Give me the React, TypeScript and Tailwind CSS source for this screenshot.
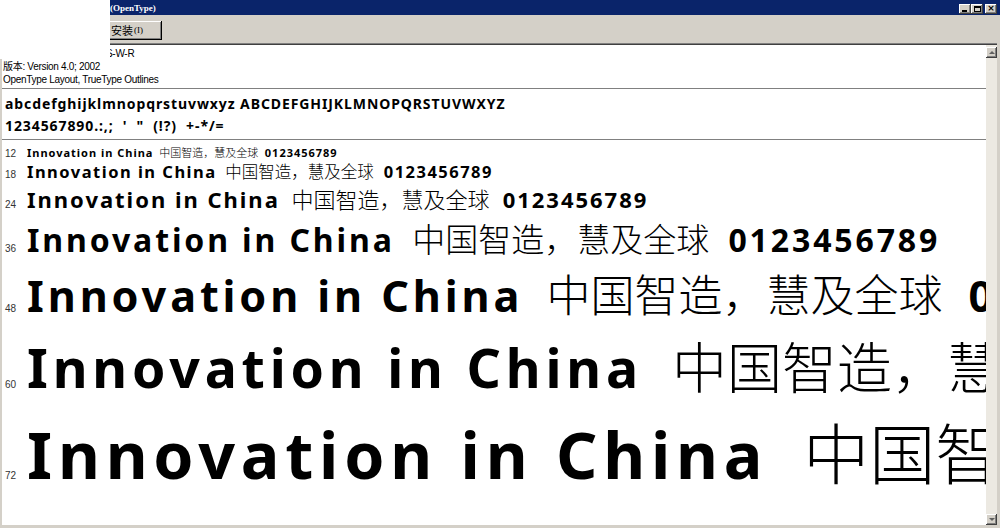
import React from "react";

const LATIN = "font-['Noto_Sans',sans-serif] font-bold";
const CJK = "font-['Noto_Sans_CJK_SC',sans-serif] font-light";
const UI = "font-['Liberation_Sans','Noto_Sans_CJK_SC',sans-serif]";

const rows = [
  { label: "12", box: "h-[22px] leading-[22px] text-[11px]", cjk: "text-[11px]" },
  { label: "18", box: "h-[16px] leading-[16px] text-[16.5px]", cjk: "text-[16.5px]" },
  { label: "24", box: "h-[39px] leading-[39px] text-[22px]", cjk: "text-[22px]" },
  { label: "36", box: "h-[41px] leading-[41px] text-[32px]", cjk: "text-[33px]" },
  { label: "48", box: "h-[69px] leading-[69px] text-[43.2px]", cjk: "text-[44px]" },
  { label: "60", box: "h-[72px] leading-[72px] text-[53.6px]", cjk: "text-[55px]" },
  { label: "72", box: "h-[100px] leading-[100px] text-[64.5px]", cjk: "text-[66px]" },
];

const bevel =
  "bg-[#d4d0c8] shadow-[inset_-1px_-1px_0_#404040,inset_1px_1px_0_#ffffff,inset_-2px_-2px_0_#808080]";

function TitleButton({ children }: { children: React.ReactNode }) {
  return (
    <div className={`w-[12px] h-[10px] flex items-center justify-center ${bevel}`}>{children}</div>
  );
}

export default function App() {
  return (
    <div className="relative w-[1000px] h-[528px] overflow-hidden bg-[#d4d0c8] text-black">
      {/* title bar */}
      <div className="h-[15px] bg-[#0a246a] flex items-end justify-between">
        <div className="pl-[110px] pb-[2px] text-[9px] leading-none font-bold text-white font-['Liberation_Serif',serif]">
          (OpenType)
        </div>
        <div className="flex items-center pr-[3px] pb-[1px]">
          <TitleButton>
            <div className="w-[5px] h-[2px] bg-black mt-[4px] -ml-[1px]" />
          </TitleButton>
          <TitleButton>
            <div className="w-[7px] h-[6px] border border-black border-t-2" />
          </TitleButton>
          <div className="w-[2px]" />
          <TitleButton>
            <span className="text-[9px] leading-none font-bold font-['DejaVu_Sans',sans-serif] -mt-[1px]">×</span>
          </TitleButton>
        </div>
      </div>

      {/* toolbar */}
      <div className="h-[28px] pl-[96px] pt-[6px]">
        <div
          className={`w-[66px] h-[19px] pl-[15px] flex items-center text-[11px] ${UI} bg-[#d4d0c8] shadow-[inset_-1px_-1px_0_#000000,inset_1px_1px_0_#ffffff,inset_-2px_-2px_0_#808080]`}
        >
          <span className="font-['Noto_Sans_CJK_SC',sans-serif] text-[11px]">安装</span>
          <span className="text-[9px] font-['Liberation_Serif',serif] ml-[1px]">(I)</span>
        </div>
      </div>

      {/* main area */}
      <div className="flex ml-[2px] mr-[3px] h-[482px] border-t border-[#808080]">
        <div className="flex flex-1 min-w-0 border-t border-[#404040]">
          <div className="flex-1 min-w-0 bg-white overflow-hidden">
            {/* info */}
            <div className={`pt-[2px] pl-[1px] text-[10px] leading-[13px] tracking-[-0.3px] ${UI}`}>
              <div className="h-[13px] whitespace-nowrap">
                <span className="inline-block w-[103px]">名称:</span>S-W-R
              </div>
              <div className="h-[13px] whitespace-nowrap">版本: Version 4.0; 2002</div>
              <div className="h-[13px] whitespace-nowrap">OpenType Layout, TrueType Outlines</div>
            </div>
            <div className="mt-[2px] h-px bg-[#808080]" />

            {/* characters */}
            <div className={`pt-[4px] pl-[3px] text-[14px] leading-[22px] tracking-[0.065em] ${LATIN}`}>
              <div className="h-[22px] whitespace-nowrap">
                abcdefghijklmnopqrstuvwxyz ABCDEFGHIJKLMNOPQRSTUVWXYZ
              </div>
              <div className="h-[22px] whitespace-pre">{"1234567890.:,;  '  \"  (!?)  +-*/="}</div>
            </div>
            <div className="mt-[2px] h-px bg-[#808080]" />

            {/* samples */}
            <div className="pt-[1px]">
              {rows.map((r) => (
                <div key={r.label} className={`${r.box} whitespace-nowrap tracking-[0.09em] ${LATIN}`}>
                  <span className="inline-block w-[25px] pl-[3px] text-[10px] leading-none font-normal tracking-normal text-[#333333] font-['Liberation_Sans',sans-serif]">
                    {r.label}
                  </span>
                  Innovation in China
                  <span className={`${CJK} ${r.cjk} tracking-normal ml-[0.53em]`}>中国智造，慧及全球</span>
                  <span className="ml-[0.6em]">0123456789</span>
                </div>
              ))}
            </div>
          </div>

          {/* scrollbar */}
          <div className="w-[11px] shrink-0 bg-[#ece9e2] flex flex-col justify-between pt-[2px]">
            <div className={`w-[11px] h-[11px] flex items-center justify-center ${bevel}`}>
              <div className="w-0 h-0 border-l-[3px] border-r-[3px] border-b-[3px] border-l-transparent border-r-transparent border-b-[#606060]" />
            </div>
            <div className={`w-[11px] h-[11px] flex items-center justify-center ${bevel}`}>
              <div className="w-0 h-0 border-l-[3px] border-r-[3px] border-t-[3px] border-l-transparent border-r-transparent border-t-[#606060]" />
            </div>
          </div>
        </div>
      </div>

      {/* blanked region */}
      <div className="absolute left-0 top-0 w-[110px] h-[59px] bg-white" />
    </div>
  );
}
